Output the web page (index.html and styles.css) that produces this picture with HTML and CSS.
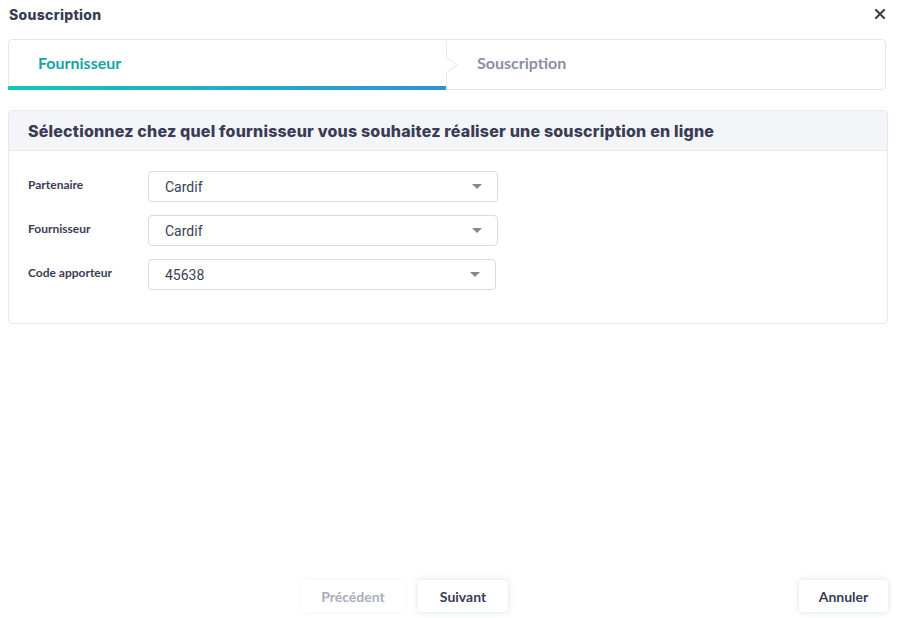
FILE: index.html
```html
<!DOCTYPE html>
<html lang="fr">
<head>
<meta charset="utf-8">
<title>Souscription</title>
<link rel="stylesheet" href="styles.css">
</head>
<body>
<div class="modal">
  <header class="modal-header">
    <h1 class="modal-title">Souscription</h1>
    <button class="close" aria-label="Fermer">
      <svg width="10" height="10" viewBox="0 0 10 10"><path d="M1 1L9 9M9 1L1 9" stroke="#444" stroke-width="2.2" stroke-linecap="square"/></svg>
    </button>
  </header>

  <nav class="steps">
    <div class="step active"><span>Fournisseur</span></div>
    <div class="chevron">
      <svg width="14" height="50" viewBox="0 0 14 50"><path d="M0.5 0V17L12 25L0.5 33V50" fill="none" stroke="#e6e6e6" stroke-width="1"/></svg>
    </div>
    <div class="step"><span>Souscription</span></div>
  </nav>

  <section class="card">
    <div class="card-header">Sélectionnez chez quel fournisseur vous souhaitez réaliser une souscription en ligne</div>
    <div class="card-body">
      <div class="row">
        <label class="label">Partenaire</label>
        <div class="select"><span>Cardif</span><i class="caret"></i></div>
      </div>
      <div class="row">
        <label class="label">Fournisseur</label>
        <div class="select"><span>Cardif</span><i class="caret"></i></div>
      </div>
      <div class="row">
        <label class="label">Code apporteur</label>
        <div class="select narrow"><span>45638</span><i class="caret"></i></div>
      </div>
    </div>
  </section>

  <footer class="modal-footer">
    <div class="nav-buttons">
      <button class="btn disabled">Précédent</button>
      <button class="btn">Suivant</button>
    </div>
    <button class="btn cancel">Annuler</button>
  </footer>
</div>
</body>
</html>
```

FILE: styles.css
```css
* { box-sizing: border-box; }
html, body { margin: 0; padding: 0; background: #fff; }
body { font-family: Lato, "Open Sans", sans-serif; color: #3f4254; }

.modal {
  height: 618px;
  display: flex;
  flex-direction: column;
  padding: 0 9px 0 8px;
}

.modal-header {
  display: flex;
  justify-content: space-between;
  align-items: center;
  height: 28px;
  padding-left: 1px;
}
.modal-title {
  margin: 0;
  font-family: Inter, sans-serif;
  font-weight: 800;
  font-size: 14px;
  color: #3a3c55;
  letter-spacing: 0.3px;
}
.close {
  border: 0;
  background: none;
  padding: 0;
  width: 10px;
  height: 10px;
  margin-right: 3px;
  display: flex;
}

.steps {
  margin-top: 11px;
  height: 51px;
  border: 1px solid #e6e6e6;
  border-radius: 4px;
  display: flex;
  margin-right: 2px;
}
.step {
  display: flex;
  align-items: center;
  font-weight: 700;
  font-size: 16px;
  color: #8b8fa3;
  padding-left: 18px;
  padding-bottom: 4px;
  flex: 1;
}
.step.active {
  flex: 0 0 438px;
  padding-left: 30px;
  padding-bottom: 2px;
  color: #13a5a5;
  border-bottom: 4px solid transparent;
  border-image: linear-gradient(90deg, #12c7b7, #2f93d4) 1;
  margin-bottom: -1px;
  margin-left: -1px;
}
.chevron { width: 13px; display: flex; }

.card {
  margin-top: 20px;
  border: 1px solid #e3eaf4;
  border-radius: 4px;
  height: 214px;
}
.card-header {
  background: #f3f5f9;
  height: 40px;
  border-bottom: 1px solid #e3eaf4;
  display: flex;
  align-items: center;
  padding-left: 19px;
  font-family: Inter, sans-serif;
  font-weight: 800;
  font-size: 16px;
  letter-spacing: 0.2px;
  color: #3a3c55;
  border-radius: 4px 4px 0 0;
}
.card-body {
  padding: 20px 19px;
  display: flex;
  flex-direction: column;
  gap: 13px;
}
.row {
  display: flex;
  align-items: flex-start;
}
.label {
  width: 120px;
  font-size: 12px;
  font-weight: 700;
  color: #3a3c55;
  padding-top: 6px;
}
.select {
  width: 350px;
  height: 31px;
  border: 1px solid #dadada;
  border-radius: 4px;
  display: flex;
  align-items: center;
  justify-content: space-between;
  padding: 0 15px 0 16px;
  font-family: Roboto, sans-serif;
  font-size: 14px;
  color: #3b3f55;
}
.select.narrow { width: 348px; }
.caret {
  width: 0; height: 0;
  border-left: 5px solid transparent;
  border-right: 5px solid transparent;
  border-top: 5px solid #888;
}

.modal-footer {
  margin-top: auto;
  height: 32px;
  margin-bottom: 6px;
  display: flex;
  align-items: center;
  justify-content: flex-end;
  position: relative;
}
.nav-buttons {
  position: absolute;
  left: 293px;
  top: 0;
  display: flex;
  gap: 13px;
}
.btn {
  height: 32px;
  border: 0;
  border-radius: 4px;
  background: #fff;
  font-family: Lato, sans-serif;
  font-weight: 700;
  font-size: 14px;
  color: #3a3c55;
  padding: 0;
  box-shadow: 0 0 6px rgba(82, 110, 200, 0.22);
}
.btn.disabled {
  color: #a9acbb;
  box-shadow: 0 0 5px rgba(82, 110, 200, 0.08);
  width: 104px;
}
.btn.cancel { width: 89px; }
.nav-buttons .btn:not(.disabled) { width: 90px; }
```
